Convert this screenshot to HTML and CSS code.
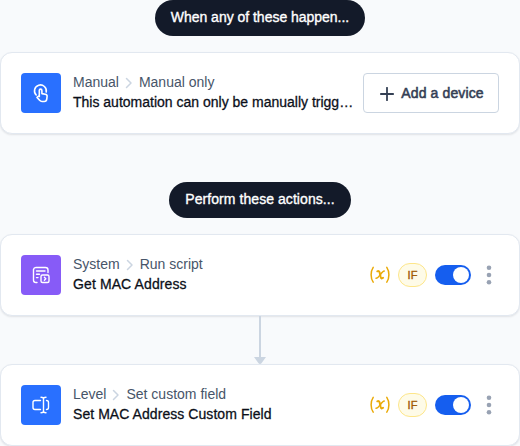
FILE: index.html
```html
<!DOCTYPE html>
<html lang="en">
<head>
<meta charset="utf-8">
<title>Automation</title>
<link rel="stylesheet" href="styles.css">
</head>
<body>
<main class="flow">
  <h2 class="pill pill-when"><span>When any of these happen...</span></h2>
  <section class="card">
    <div class="tile blue touch">
      <svg width="20" height="20" viewBox="0 0 20 20"><path d="M5.200 12A5.900 5.900 0 1 1 15.200 9"/><path d="M8.300 13.500V7.400a1.300 1.300 0 0 1 2.600 0v3.200l3.400.6c1.200.2 1.900.9 1.800 2l-.3 2.700c-.2 1.700-1 2.600-2.500 2.600h-2.300c-1 0-1.700-.4-2.400-1.200l-2.600-2.900c.7-1.100 1.500-1.400 2.300-.9z"/></svg>
    </div>
    <div class="info">
      <div class="crumb"><span>Manual</span><svg class="chev" width="8" height="12" viewBox="0 0 8 12"><path d="M1.500 1.500 6 6l-4.500 4.500"/></svg><span>Manual only</span></div>
      <div class="title">This automation can only be manually trigg…</div>
    </div>
    <button class="add"><svg width="14" height="14" viewBox="0 0 14 14"><path d="M7 .8v12.400M.8 7h12.400"/></svg><span>Add a device</span></button>
  </section>

  <h2 class="pill pill-do"><span>Perform these actions...</span></h2>
  <section class="card">
    <div class="tile purple">
      <svg width="20" height="20" viewBox="0 0 20 20"><path d="M6 17.500H5A2.500 2.500 0 0 1 2.500 15V4.500A2.500 2.500 0 0 1 5 2.500h9.500A2.500 2.500 0 0 1 17 5v2.500M5.500 6h8.500M5.500 9.300h3M5.500 12.600h1.500"/><rect x="10" y="10" width="8" height="7.500" rx="1.500"/><path d="m13.400 12.300 1.400 1.500-1.400 1.500"/></svg>
    </div>
    <div class="info">
      <div class="crumb"><span>System</span><svg class="chev" width="8" height="12" viewBox="0 0 8 12"><path d="M1.500 1.500 6 6l-4.500 4.500"/></svg><span>Run script</span></div>
      <div class="title t-get">Get MAC Address</div>
    </div>
    <div class="controls">
      <svg class="var" width="20" height="18" viewBox="0 0 20 18"><path d="M3.200 1.300C.4 5.500.4 12 3.200 16.200M16.800 1.300c2.800 4.200 2.800 10.700 0 14.900"/><path class="x" d="M7.300 5.300c1.400-.7 2 .1 2.400 1.500l.9 4c.4 1.600 1.100 2.100 2.500 1"/><path d="M14.200 5.100c-2.400-.1-5.200 7.400-8.200 7.200"/></svg>
      <span class="if">IF</span>
      <span class="toggle"><i></i></span>
      <svg class="dots" width="6" height="20" viewBox="0 0 6 20"><circle cx="3" cy="2.700" r="2.300"/><circle cx="3" cy="10" r="2.300"/><circle cx="3" cy="17.300" r="2.300"/></svg>
    </div>
  </section>
  <svg class="arrow" width="12" height="48" viewBox="0 0 12 48"><path d="M5 0h2v41h5l-4.500 6.200q-1.500 1.600-3 0L0 41h5z"/></svg>
  <section class="card">
    <div class="tile blue">
      <svg width="20" height="20" viewBox="0 0 20 20"><path d="M9.500 5.500H4A2 2 0 0 0 2 7.500v5a2 2 0 0 0 2 2h5.500M15.500 5.500a2 2 0 0 1 2 2v5a2 2 0 0 1-2 2M10 2.300c1.600 0 2.500.5 2.500 1.500 0-1 .9-1.500 2.500-1.500M10 17.700c1.600 0 2.500-.5 2.500-1.500 0 1 .9 1.500 2.500 1.500M12.500 3.800v12.400"/></svg>
    </div>
    <div class="info">
      <div class="crumb"><span>Level</span><svg class="chev" width="8" height="12" viewBox="0 0 8 12"><path d="M1.500 1.500 6 6l-4.500 4.500"/></svg><span>Set custom field</span></div>
      <div class="title t-set">Set MAC Address Custom Field</div>
    </div>
    <div class="controls">
      <svg class="var" width="20" height="18" viewBox="0 0 20 18"><path d="M3.200 1.300C.4 5.500.4 12 3.200 16.200M16.800 1.300c2.800 4.200 2.800 10.700 0 14.900"/><path class="x" d="M7.300 5.300c1.400-.7 2 .1 2.400 1.500l.9 4c.4 1.600 1.100 2.100 2.500 1"/><path d="M14.200 5.100c-2.400-.1-5.200 7.400-8.200 7.200"/></svg>
      <span class="if">IF</span>
      <span class="toggle"><i></i></span>
      <svg class="dots" width="6" height="20" viewBox="0 0 6 20"><circle cx="3" cy="2.700" r="2.300"/><circle cx="3" cy="10" r="2.300"/><circle cx="3" cy="17.300" r="2.300"/></svg>
    </div>
  </section>
</main>
</body>
</html>
```
FILE: styles.css
```css
* { box-sizing: border-box; }
body {
  margin: 0;
  height: 446px;
  overflow: hidden;
  background: #f8fafc;
  font: 14px/20px "Liberation Sans", Arial, sans-serif;
}
svg { display: block; flex: none; fill: none; stroke: currentColor; stroke-linecap: round; stroke-linejoin: round; }
.flow { display: flex; flex-direction: column; align-items: center; }
.pill {
  display: flex;
  align-items: center;
  justify-content: center;
  height: 36px;
  margin: 0 0 16px;
  padding-bottom: 2px;
  border-radius: 18px;
  background: #131a29;
  color: #fff;
  font-size: 14px;
  font-weight: 400;
  white-space: nowrap;
  -webkit-text-stroke: .35px;
}
.pill-when { width: 210px; letter-spacing: -.02px; }
.pill-do { width: 182px; margin-top: 48px; letter-spacing: .06px; }
.card {
  display: flex;
  align-items: center;
  gap: 12px;
  width: 520px;
  height: 82px;
  padding: 0 20px;
  border: 1px solid #e2e8f0;
  border-radius: 12px;
  background: #fff;
  box-shadow: 0 1px 2px rgba(15, 23, 42, .1);
}
.tile {
  display: flex;
  flex: none;
  align-items: center;
  justify-content: center;
  width: 40px;
  height: 40px;
  border-radius: 4px;
  color: #fff;
  stroke-width: 1.4;
}
.touch { stroke-width: 1.6; }
.blue { background: #2970ff; }
.purple { background: #875bf7; }
.info { flex: 1; min-width: 0; padding-bottom: 2px; white-space: nowrap; }
.crumb { display: flex; align-items: center; color: #475569; }
.chev { margin: 2px 6px 0; color: #cbd5e1; stroke-width: 1.5; }
.title { color: #0b0f19; -webkit-text-stroke: .28px; }
.t-get { letter-spacing: .11px; }
.t-set { letter-spacing: .06px; }
.add {
  display: flex;
  flex: none;
  align-items: center;
  justify-content: center;
  gap: 7px;
  width: 136px;
  height: 40px;
  margin-left: -12px;
  padding: 0 0 0 2px;
  border: 1px solid #cbd5e1;
  border-radius: 4px;
  background: #fff;
  color: #344054;
  font: inherit;
  white-space: nowrap;
}
.add span { letter-spacing: .12px; -webkit-text-stroke: .55px; }
.add svg { margin-top: 1px; stroke-width: 1.8; }
.controls { display: flex; flex: none; align-items: center; gap: 8px; }
.var { color: #eaaa08; stroke-width: 1.5; }
.x { stroke-width: 2; }
.if {
  width: 29px;
  height: 24px;
  border: 1px solid #fde68a;
  border-radius: 12px;
  background: #fefbe8;
  color: #a15c07;
  font-size: 11px;
  line-height: 23px;
  text-align: center;
  -webkit-text-stroke: .4px;
}
.toggle {
  display: flex;
  justify-content: flex-end;
  width: 36px;
  height: 20px;
  padding: 2px;
  border-radius: 10px;
  background: #155eef;
}
.toggle i { width: 16px; height: 16px; border-radius: 50%; background: #fff; }
.dots { margin: 0 7px; fill: #98a2b3; stroke: none; }
.arrow { fill: #cbd5e1; stroke: none; }
```
